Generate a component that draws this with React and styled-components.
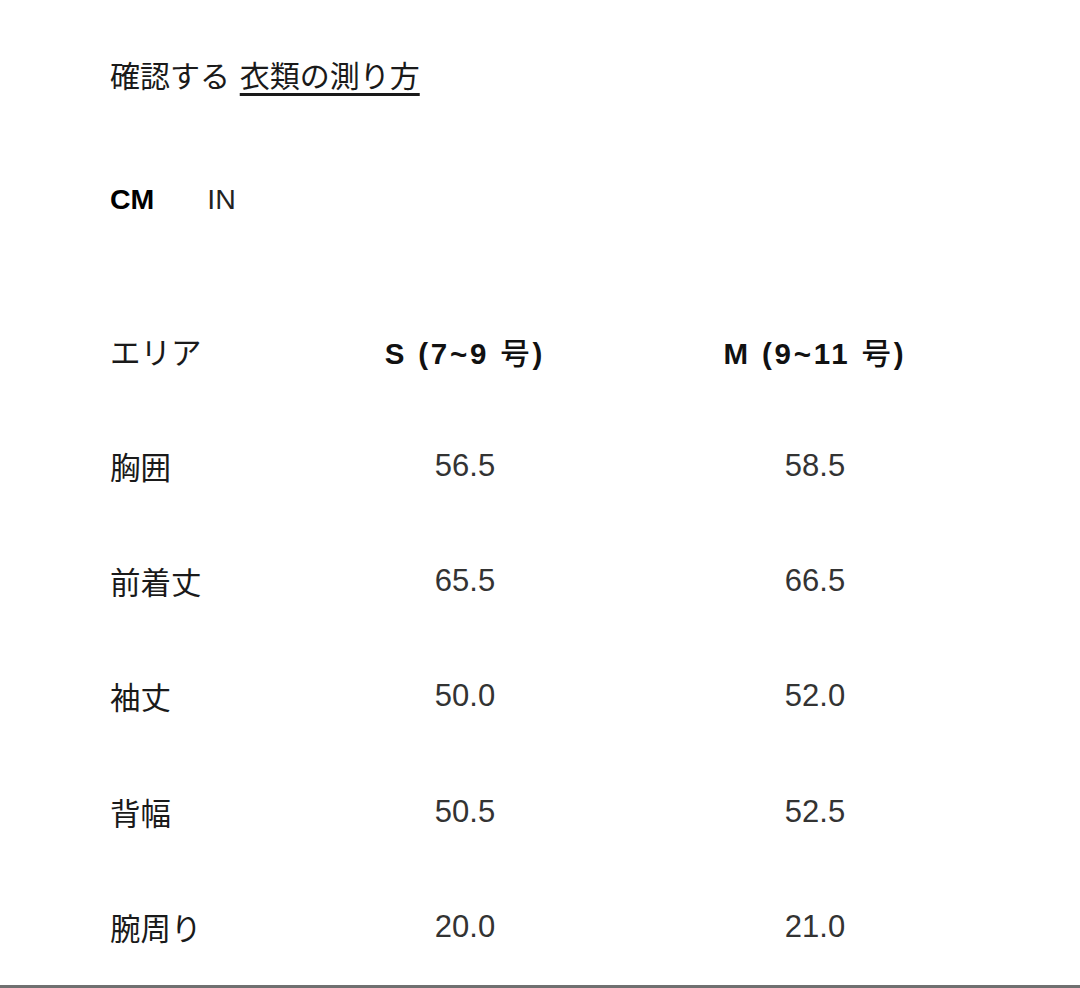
import React from "react";
import styled, { createGlobalStyle } from "styled-components";

const rows = [
  { area: "胸囲", s: "56.5", m: "58.5" },
  { area: "前着丈", s: "65.5", m: "66.5" },
  { area: "袖丈", s: "50.0", m: "52.0" },
  { area: "背幅", s: "50.5", m: "52.5" },
  { area: "腕周り", s: "20.0", m: "21.0" },
];

export default function App() {
  return (
    <>
      <GlobalStyle />
      <Page>
        <Guide>
          確認する <GuideLink>衣類の測り方</GuideLink>
        </Guide>
        <Units>
          <Unit $active>CM</Unit>
          <Unit>IN</Unit>
        </Units>
        <Table>
          <Row>
            <Label>エリア</Label>
            <Head>
              S (7~9 <Go>号</Go>)
            </Head>
            <Head>
              M (9~11 <Go>号</Go>)
            </Head>
          </Row>
          {rows.map((r) => (
            <Row key={r.area}>
              <Label>{r.area}</Label>
              <Value>{r.s}</Value>
              <Value>{r.m}</Value>
            </Row>
          ))}
        </Table>
      </Page>
    </>
  );
}

const GlobalStyle = createGlobalStyle`
  body {
    margin: 0;
    background: #fff;
    font-family: "Liberation Sans", "Noto Sans CJK JP", sans-serif;
    color: #111;
  }
`;

const Page = styled.div`
  height: 988px;
  box-sizing: border-box;
  padding: 56px 90px 0 110px;
  border-bottom: 3px solid #707070;
  overflow: hidden;
`;

// guide link

const Guide = styled.div`
  font-family: "Noto Sans CJK JP", sans-serif;
  font-size: 30px;
  line-height: 36px;
  word-spacing: 3px;
  color: #1a1a1a;
`;

const GuideLink = styled.span`
  text-decoration: underline;
  text-decoration-thickness: 3px;
  text-underline-offset: 6px;
`;

// unit switch

const Units = styled.div`
  display: flex;
  gap: 53px;
  margin-top: 89px;
  height: 36px;
  align-items: center;
`;

const Unit = styled.span`
  font-size: 28.5px;
  font-weight: ${(p) => (p.$active ? 700 : 400)};
  color: ${(p) => (p.$active ? "#000" : "#222")};
`;

// size table

const Table = styled.div`
  margin-top: 76px;
`;

const Row = styled.div`
  display: grid;
  grid-template-columns: 180px 350px 350px;
  height: 115.25px;
  align-items: center;
`;

const Label = styled.div`
  font-family: "Noto Sans CJK JP", sans-serif;
  font-size: 30.5px;
  color: #1a1a1a;
`;

const Head = styled.div`
  text-align: center;
  font-size: 29.5px;
  font-weight: 700;
  letter-spacing: 2.8px;
  color: #111;
`;

const Go = styled.span`
  font-family: "Noto Sans CJK JP", sans-serif;
  font-weight: 500;
`;

const Value = styled.div`
  text-align: center;
  font-size: 31px;
  color: #333;
`;
